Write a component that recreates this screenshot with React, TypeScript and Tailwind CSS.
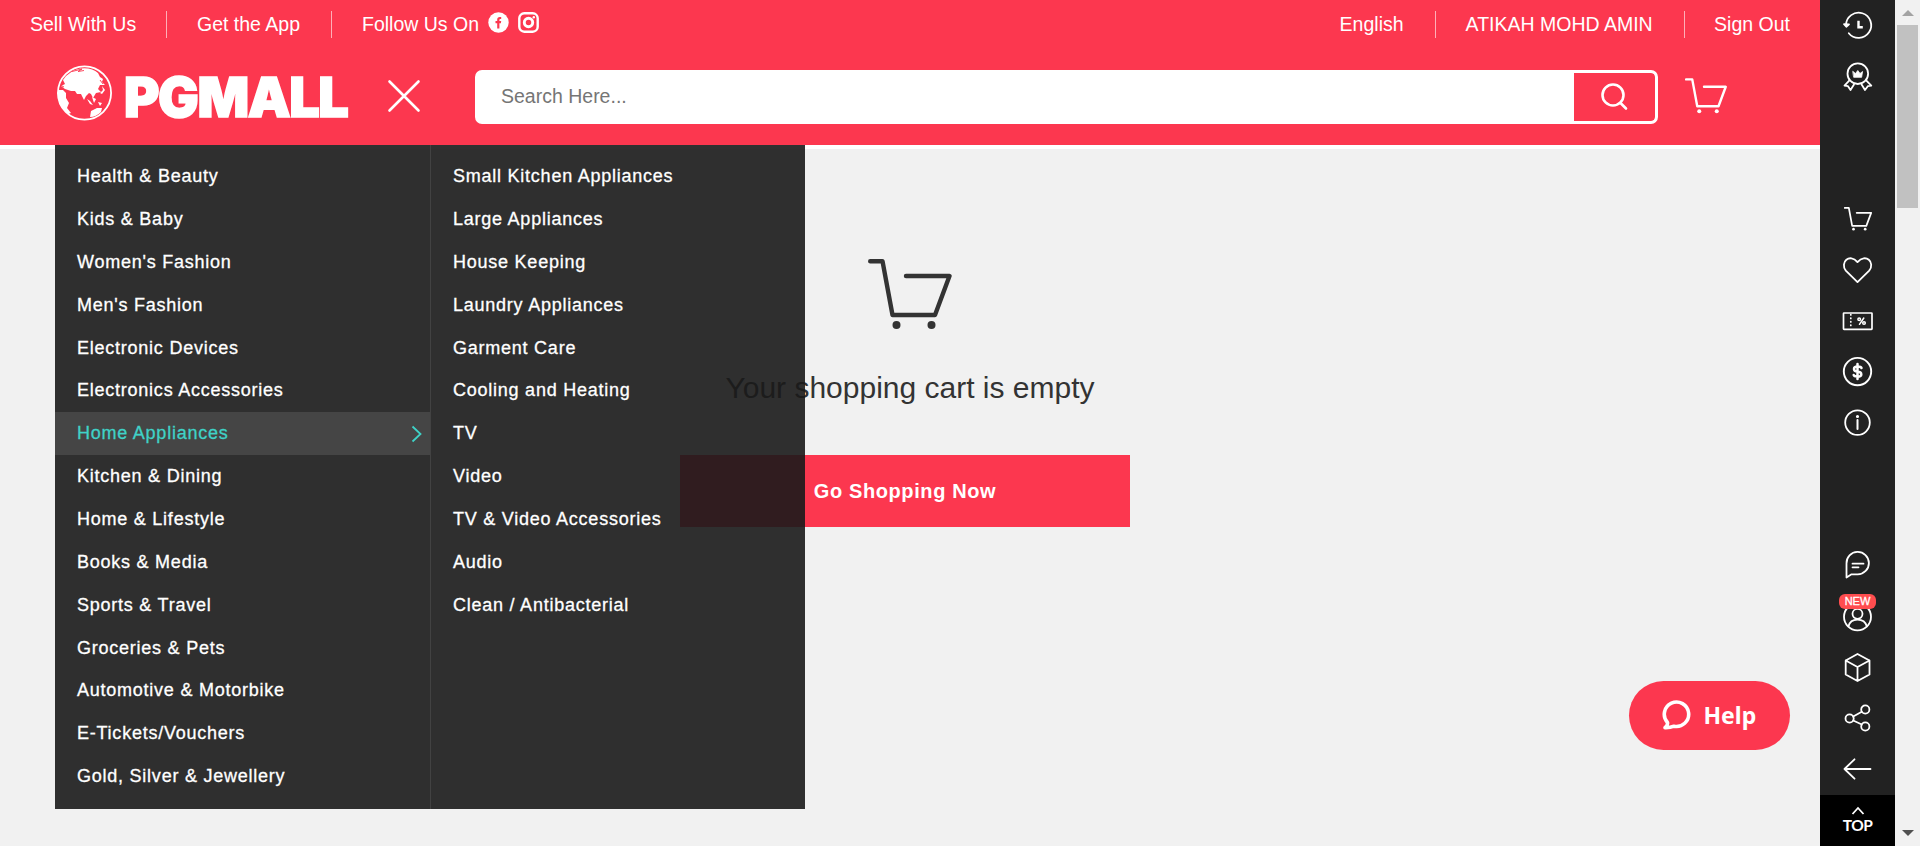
import React from "react";

const categories = [
  "Health & Beauty", "Kids & Baby", "Women's Fashion", "Men's Fashion", "Electronic Devices",
  "Electronics Accessories", "Home Appliances", "Kitchen & Dining", "Home & Lifestyle", "Books & Media",
  "Sports & Travel", "Groceries & Pets", "Automotive & Motorbike", "E-Tickets/Vouchers", "Gold, Silver & Jewellery",
];
const subcategories = [
  "Small Kitchen Appliances", "Large Appliances", "House Keeping", "Laundry Appliances", "Garment Care",
  "Cooling and Heating", "TV", "Video", "TV & Video Accessories", "Audio", "Clean / Antibacterial",
];

function Cart({ className, stroke }: { className: string; stroke: number }) {
  return (
    <svg viewBox="0 0 84 71" className={className} fill="none" stroke="currentColor" strokeWidth={stroke} strokeLinecap="round" strokeLinejoin="round">
      <path d="M2.2 2.2H14.5L24.5 56H67L81.5 17H38" />
      <circle cx="28.5" cy="66" r="4" fill="currentColor" stroke="none" />
      <circle cx="63.5" cy="66" r="4" fill="currentColor" stroke="none" />
    </svg>
  );
}

function Icon({ children, w = 1.8, dy = 0 }: { children: React.ReactNode; w?: number; dy?: number }) {
  return (
    <svg viewBox="0 0 32 32" className="-mt-px size-8 overflow-visible" fill="none" stroke="currentColor" strokeWidth={w} strokeLinecap="round" strokeLinejoin="round">
      <g transform={`translate(0 ${dy})`}>{children}</g>
    </svg>
  );
}

function Cell({ children }: { children: React.ReactNode }) {
  return <div className="relative flex h-[51px] items-center justify-center">{children}</div>;
}

function Logo() {
  return (
    <svg width="294" height="56" viewBox="0 0 294 56" fill="#fff" className="overflow-visible">
      <circle cx="28.500" cy="28" r="26.600" fill="none" stroke="#fff" strokeWidth="1.800" />
      <path d="M14 8C22 1.500 36 2 42 8L44 12L47 14L46 17L49 20L44 20L42 24L45 27L40 28L37 33L35 29L33 28L30 31L28 35L25 29L21 29L19 26L15 26L9 24L5 21L9 19L7 15L10 11Z" />
      <path d="M2 25L7 25L10 28L10 33L13 38L11 43L15 48L12 49Q3 42 2 31Z" />
      <path d="M35 46L41 43L46 43L45 47Q40 52 34 52Z M31 34L34 36L37 40L34 39Z M36 32L40 34L38 38Z M42 37L46 38L44 41Z M46 21L49 25L46 29L44 28L47 25Z" />
      <path d="M16 6.500L26 4L22 6.500L28 5.500M4 20L8 22M44 15L47 19" stroke="#fc374f" strokeWidth="0.900" fill="none" />
      <text x="68" y="51.800" fontFamily="Inter, 'Liberation Sans', sans-serif" fontWeight="900" fontSize="55.500" textLength="223.500" lengthAdjust="spacingAndGlyphs" stroke="#fff" strokeWidth="1.600" letterSpacing="-1.500">PGMALL</text>
    </svg>
  );
}

function Header() {
  return (
    <header className="h-[149px] border-b-4 border-white bg-[#fc374f] text-white">
      <div className="flex h-[49px] items-center justify-between px-[30px] text-[19.5px] leading-[27px]">
        <div className="flex h-[27px] items-center">
          <span className="w-[136px] whitespace-nowrap pb-px">Sell With Us</span>
          <span className="mr-[30px] h-[27px] w-px bg-white/60" />
          <span className="w-[134px] whitespace-nowrap pb-px">Get the App</span>
          <span className="mr-[30px] h-[27px] w-px bg-white/60" />
          <span className="w-[126px] whitespace-nowrap pb-px">Follow Us On</span>
          <svg width="21" height="21" viewBox="0 0 21 21" className="mb-[5px]">
            <circle cx="10.500" cy="10.500" r="10.200" fill="#fff" />
            <path d="M9.200 16.500V11.200H7.500V9H9.200V7.600Q9.200 5 11.800 5H13.200V7H12.200Q11.400 7 11.400 7.900V9H13.200L12.900 11.200H11.400V16.500Z" fill="#fc374f" />
          </svg>
          <svg width="21" height="21" viewBox="0 0 21 21" className="mb-[5px] ml-[9px]" fill="none" stroke="#fff">
            <rect x="1.300" y="1.300" width="18.400" height="18.400" rx="5" strokeWidth="2.400" />
            <circle cx="10.500" cy="10.500" r="4.200" strokeWidth="2.900" />
            <circle cx="15.800" cy="5.200" r="1.200" fill="#fff" stroke="none" />
          </svg>
        </div>
        <div className="flex h-[27px] items-center">
          <span className="w-[95px] whitespace-nowrap pb-px">English</span>
          <span className="mr-[30px] h-[27px] w-px bg-white/60" />
          <span className="w-[218px] whitespace-nowrap pb-px">ATIKAH MOHD AMIN</span>
          <span className="mr-[29.5px] h-[27px] w-px bg-white/60" />
          <span className="whitespace-nowrap pb-px">Sign Out</span>
        </div>
      </div>
      <div className="mt-px flex h-[94px] items-center pl-[56px]">
        <div className="w-[294px] pb-[9px]"><Logo /></div>
        <svg width="34" height="34" viewBox="0 0 34 34" className="mb-[2px] ml-[37px]" stroke="#fff" strokeWidth="2.600" strokeLinecap="round">
          <path d="M2.500 2.500L31.500 31.500M31.500 2.500L2.500 31.500" />
        </svg>
        <div className="ml-[54px] flex h-[54px] w-[1183px] overflow-hidden rounded-[7px] border-[3px] border-white bg-white">
          <input placeholder="Search Here..." className="min-w-0 flex-1 bg-white pb-px pl-[23px] text-[19.5px] text-gray-700 outline-none placeholder:text-[#757575]" />
          <button className="flex w-[81px] items-center justify-center rounded-r-[4px] bg-[#fc374f] pb-px">
            <svg width="30" height="30" viewBox="0 0 30 30" fill="none" stroke="#fff" strokeWidth="2.600" strokeLinecap="round">
              <circle cx="13" cy="13" r="10.500" />
              <path d="M20.500 21L26 26.500" />
            </svg>
          </button>
        </div>
        <Cart className="mb-[2px] ml-[27px] h-[36px] w-[42px]" stroke={4.8} />
      </div>
    </header>
  );
}

function Menu() {
  const row = "flex h-[42.86px] items-center pl-[22px] whitespace-nowrap";
  return (
    <nav className="absolute left-[55px] top-[145px] flex h-[664px] w-[750px] bg-[#191919]/90 text-[18px] tracking-[0.76px] text-white [-webkit-text-stroke:0.3px]">
      <ul className="w-[376px] border-r border-[#424242] pt-[10.15px]">
        {categories.map((c) =>
          c === "Home Appliances" ? (
            <li key={c} className="flex h-[42.86px] items-center justify-between whitespace-nowrap bg-[#454545] pl-[22px] pr-[8px] text-[#3fd2c7]">
              {c}
              <svg width="11" height="18" viewBox="0 0 11 18" fill="none" stroke="currentColor" strokeWidth="1.800"><path d="M1.500 1.500L9.500 9L1.500 16.500" /></svg>
            </li>
          ) : (
            <li key={c} className={row}>{c}</li>
          )
        )}
      </ul>
      <ul className="pt-[10.15px]">
        {subcategories.map((c) => <li key={c} className={row}>{c}</li>)}
      </ul>
    </nav>
  );
}

function Sidebar() {
  return (
    <aside className="flex h-full w-[75px] flex-col justify-between bg-[#222] text-white">
      <div>
        <Cell><Icon dy={0.7}>
          <path d="M4 15.500A12.600 12.600 0 1 1 6.800 23.500" /><path d="M2 14.500L4.300 17L7 14.700Z" fill="currentColor" /><path d="M16.500 11V17.500H20.800" strokeWidth="2.400" strokeLinecap="butt" strokeLinejoin="miter" />
        </Icon></Cell>
        <Cell><Icon dy={0.7}>
          <circle cx="15.800" cy="13" r="10.300" /><path d="M7.200 20L2.500 25L6 25.500L8.500 29.300L12 23.800M24.400 20L29.300 25L25.800 25.500L23 29.300L19.600 23.800" />
          <path d="M11 10.800L13.500 12.800L15.800 9.800L18 12.800L20.600 10.800L19.600 16.600H12Z" fill="currentColor" strokeWidth="0.800" />
        </Icon></Cell>
      </div>
      <div>
        <Cell><Cart className="h-[24px] w-[28px]" stroke={5.2} /></Cell>
        <Cell><Icon dy={-0.9}><path d="M15.500 29L3.800 17.500C-2.300 9.500 7.500 -0.500 15.500 9C23.800 -0.500 33.500 9.500 27.200 17.500Z" /></Icon></Cell>
        <Cell><Icon w={1.7}>
          <rect x="1.500" y="8" width="28.500" height="16.300" rx="0.500" /><path d="M8.800 9.500V23" strokeDasharray="0.500 3" />
          <circle cx="17.200" cy="14.300" r="1.300" strokeWidth="1.500" /><circle cx="22" cy="18" r="1.300" strokeWidth="1.500" /><path d="M21.800 13L17.500 19.300" strokeWidth="1.500" />
        </Icon></Cell>
        <Cell><Icon w={1.9} dy={-0.9}>
          <circle cx="15.500" cy="16.500" r="13.700" /><path d="M19.500 12.900Q19 11.500 15.500 11.500Q12 11.500 12 13.800Q12 16 15.500 16.500Q19.300 17 19.300 19.300Q19.300 21.500 15.500 21.500Q12 21.500 11.700 20M15.500 9V24" strokeWidth="2.500" />
        </Icon></Cell>
        <Cell><Icon dy={-0.9}>
          <circle cx="15.500" cy="16.500" r="12.300" /><path d="M15.500 13.800V23" strokeWidth="2" /><circle cx="15.500" cy="10.400" r="0.700" fill="currentColor" />
        </Icon></Cell>
      </div>
      <div>
        <Cell><Icon>
          <path d="M4.500 28.500V14.500A11.200 11.200 0 1 1 15.700 25.300H9.500Z" /><path d="M10.500 14.700H21.500M10.500 18.300H16.500" />
        </Icon></Cell>
        <Cell>
          <Icon dy={0.8}><circle cx="15.500" cy="16" r="13.500" /><circle cx="15.500" cy="13" r="5" /><path d="M6.500 25.500Q8 18.800 15.500 18.800Q23 18.800 24.800 25.500" /></Icon>
          <span className="absolute left-[19px] top-[2.500px] h-[15px] w-[37px] rounded-[6px] bg-[#ff4d4f] text-center text-[11px] leading-[15px] [-webkit-text-stroke:0.3px]">NEW</span>
        </Cell>
        <Cell><Icon><path d="M15.500 3L27.500 9.500V23.500L15.500 30L3.700 23.500V9.500ZM3.700 9.500L15.500 16L27.500 9.500M15.500 16V29.500" /></Icon></Cell>
        <Cell><Icon>
          <circle cx="7.600" cy="16.500" r="4.100" /><circle cx="23.300" cy="7.500" r="4.100" /><circle cx="23.300" cy="24.500" r="4.100" /><path d="M11.200 14.500L19.800 9.700M11.200 18.500L19.800 22.500" />
        </Icon></Cell>
        <Cell><Icon><path d="M28.500 16H2.500M12.500 6.300L2.500 16L12.500 25.700" /></Icon></Cell>
        <div className="flex h-[51px] flex-col items-center bg-black pt-[11px] font-[Lato,sans-serif] text-[15.5px] font-bold leading-[20px]">
          <svg width="14" height="9" viewBox="0 0 14 9" fill="none" stroke="#fff" strokeWidth="1.800"><path d="M1.500 8L7 2L12.500 8" /></svg>
          <span className="tracking-[-0.5px]">TOP</span>
        </div>
      </div>
    </aside>
  );
}

export default function App() {
  return (
    <div className="relative flex h-[846px] w-[1920px] overflow-hidden bg-[#f1f1f1] font-['Liberation_Sans',Arial,sans-serif]">
      <div className="w-[1820px]">
        <Header />
        <main className="flex flex-col items-center pt-[110px] text-[#333]">
          <Cart className="h-[71px] w-[84px]" stroke={4.4} />
          <h1 className="mt-[40px] text-[30px] leading-[36px]">Your shopping cart is empty</h1>
          <button className="mr-[10px] mt-[49px] h-[72px] w-[450px] bg-[#fc374f] text-[20px] font-bold tracking-[0.6px] text-white">Go Shopping Now</button>
        </main>
      </div>
      <Sidebar />
      <div className="flex w-[25px] flex-col items-center justify-between bg-[#f1f1f1] pb-[10px] pt-[10px]">
        <div className="flex flex-col items-center gap-[9px]">
          <svg width="12" height="6" viewBox="0 0 12 6"><path d="M0 6L6 0L12 6Z" fill="#a3a3a3" /></svg>
          <div className="h-[183px] w-[21px] bg-[#c1c1c1]" />
        </div>
        <svg width="12" height="6" viewBox="0 0 12 6"><path d="M0 0H12L6 6Z" fill="#505050" /></svg>
      </div>
      <Menu />
      <button className="absolute left-[1629px] top-[681px] flex h-[69px] w-[161px] items-center rounded-full bg-[#fc374f] pl-[33px] font-['Noto_Sans',sans-serif] text-[23px] font-bold text-white">
        <svg width="30" height="32" viewBox="0 0 30 32" className="mb-[2px]" fill="none" stroke="#fff" strokeWidth="3.600" strokeLinejoin="round" strokeLinecap="round">
          <path d="M5.500 23.500A12.200 12.200 0 1 1 12 27.200Q8 29 3 28.800Q6 26.500 5.500 23.500Z" />
        </svg>
        <span className="ml-[11.5px]">Help</span>
      </button>
    </div>
  );
}
